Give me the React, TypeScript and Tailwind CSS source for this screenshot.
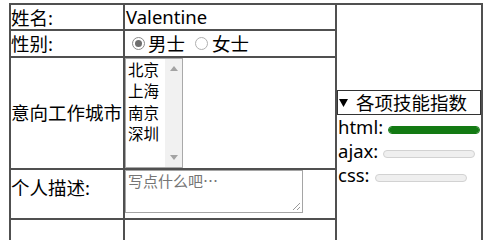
import type { ReactNode } from "react"

const skills = [
  { label: "html:", value: 1 },
  { label: "ajax:", value: 0 },
  { label: "css:", value: 0 },
]

const cities = ["北京", "上海", "南京", "深圳"]

function Cell({ className = "", children }: { className?: string; children?: ReactNode }) {
  return <div className={`border border-[#505050] ${className}`}>{children}</div>
}

function Radio({ checked }: { checked?: boolean }) {
  return (
    <span
      className={`flex h-[13px] w-[13px] shrink-0 items-center justify-center rounded-full border bg-white ${
        checked ? "border-[#8a8a8a]" : "border-[#b0b0b0]"
      }`}
    >
      {checked ? <span className="h-[7px] w-[7px] rounded-full bg-[#6e6e6e]" /> : null}
    </span>
  )
}

function Meter({ value }: { value: number }) {
  const full = value >= 1
  return (
    <span
      className={`ml-[5px] inline-block h-[8px] w-[92px] overflow-hidden rounded-full border ${
        full ? "border-[#137a13] bg-[#137a13]" : "border-[#d2d2d2] bg-[#efefef]"
      }`}
    >
      <span className="block h-full bg-[#137a13]" style={{ width: `${value * 100}%` }} />
    </span>
  )
}

export default function App() {
  return (
    <div className="min-h-screen bg-white pl-[9px] pt-[3px] font-['Noto_Sans','Noto_Sans_CJK_SC',sans-serif] text-[18.5px] text-black">
      <div className="grid w-[474px] grid-cols-[114px_212px_146px] grid-rows-[26px_27px_112px_50px_54px] border border-[#505050]">
        {/* 姓名 */}
        <Cell className="leading-[26px]">姓名:</Cell>
        <Cell className="px-[1px] leading-[24px]">Valentine</Cell>

        {/* 技能 (rowspan) */}
        <Cell className="row-span-5 flex flex-col justify-center">
          <div className="flex h-[25px] items-center border border-[#333] pt-[1px] leading-[22px]">
            <svg width="9" height="8" viewBox="0 0 9 8" className="ml-[1px] shrink-0">
              <polygon points="0,0 9,0 4.5,8" fill="#000" />
            </svg>
            <span className="ml-[8px]">各项技能指数</span>
          </div>
          {skills.map((s) => (
            <div key={s.label} className="pl-[1px] leading-[24px]">
              {s.label}
              <Meter value={s.value} />
            </div>
          ))}
        </Cell>

        {/* 性别 */}
        <Cell className="flex items-center leading-[24px]">性别:</Cell>
        <Cell className="flex items-center px-[1px] leading-[24px]">
          <span className="ml-[6px]">
            <Radio checked />
          </span>
          <span className="ml-[3px]">男士</span>
          <span className="ml-[10px]">
            <Radio />
          </span>
          <span className="ml-[4px]">女士</span>
        </Cell>

        {/* 城市 */}
        <Cell className="flex items-center leading-[24px]">意向工作城市</Cell>
        <Cell>
          <div className="flex h-[110px] w-[58px] border border-[#a9a9a9] bg-white">
            <ul className="flex-1 pl-[2px] pt-[1px] text-[15.5px] leading-[21.3px]">
              {cities.map((c) => (
                <li key={c}>{c}</li>
              ))}
            </ul>
            <div className="flex w-[17px] flex-col items-center justify-between bg-[#f1f1f1] py-[7px]">
              <svg width="8" height="5" viewBox="0 0 8 5">
                <polygon points="0,5 8,5 4,0" fill="#a3a3a3" />
              </svg>
              <svg width="8" height="5" viewBox="0 0 8 5">
                <polygon points="0,0 8,0 4,5" fill="#a3a3a3" />
              </svg>
            </div>
          </div>
        </Cell>

        {/* 个人描述 */}
        <Cell className="pt-[6px] leading-[24px]">个人描述:</Cell>
        <Cell>
          <div className="flex h-[43px] w-[178px] flex-col justify-between border border-[#a5a5a5] bg-white pl-[2px] pt-[1px]">
            <span className="text-[15px] leading-[18px] text-[#757575] font-['Noto_Sans_CJK_SC',sans-serif]">
              写点什么吧…
            </span>
            <svg width="9" height="9" viewBox="0 0 9 9" className="mb-[1px] mr-[1px] self-end">
              <line x1="1" y1="8" x2="8" y2="1" stroke="#9a9a9a" strokeWidth="1" />
              <line x1="5" y1="8" x2="8" y2="5" stroke="#9a9a9a" strokeWidth="1" />
            </svg>
          </div>
        </Cell>

        {/* 下一行 */}
        <Cell />
        <Cell />
      </div>
    </div>
  )
}
